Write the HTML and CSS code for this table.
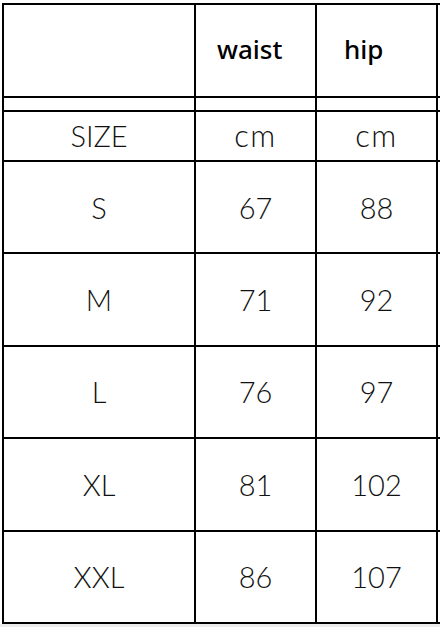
FILE: index.html
```html
<!DOCTYPE html>
<html>
<head>
<meta charset="utf-8">
<link rel="stylesheet" href="styles.css">
</head>
<body>
<div class="page">
  <div class="chart">
    <div class="cell head"></div>
    <div class="cell head waist">waist</div>
    <div class="cell head hip">hip</div>
    <div class="cell head"></div>

    <div class="cell thin"></div>
    <div class="cell thin"></div>
    <div class="cell thin"></div>
    <div class="cell thin"></div>

    <div class="cell unit">SIZE</div>
    <div class="cell unit cm">cm</div>
    <div class="cell unit cm">cm</div>
    <div class="cell unit"></div>

    <div class="cell">S</div><div class="cell">67</div><div class="cell">88</div><div class="cell"></div>
    <div class="cell">M</div><div class="cell">71</div><div class="cell">92</div><div class="cell"></div>
    <div class="cell">L</div><div class="cell">76</div><div class="cell">97</div><div class="cell"></div>
    <div class="cell">XL</div><div class="cell">81</div><div class="cell">102</div><div class="cell"></div>
    <div class="cell">XXL</div><div class="cell">86</div><div class="cell">107</div><div class="cell"></div>
  </div>
</div>
</body>
</html>
```
FILE: styles.css
```css
html, body {
  margin: 0;
  padding: 0;
  background: #ececec;
  overflow: hidden;
}

.page {
  width: 440px;
  height: 624px;
  background: #ffffff;
  overflow: hidden;
}

.chart {
  margin-top: 3px;
  margin-left: 2px;
  width: 460px;
  display: grid;
  grid-template-columns: 190px 119px 119px 30px;
  grid-template-rows: 91px 12px 48px repeat(5, 90.4px);
  gap: 2px;
  padding: 2px 0 2px 2px;
  background: #000000;
}

.cell {
  background: #ffffff;
  display: flex;
  align-items: center;
  justify-content: center;
  font-family: "Lato", "Liberation Sans", sans-serif;
  font-weight: 300;
  font-size: 29px;
  color: #111111;
}

.unit {
  padding-bottom: 2px;
}

.cm {
  font-size: 31px;
  letter-spacing: 1.5px;
}

.head {
  font-family: "Noto Sans", "Open Sans", sans-serif;
  font-weight: 500;
  font-size: 26px;
  color: #000000;
  justify-content: flex-start;
  padding-bottom: 4px;
}

.waist {
  padding-left: 21px;
}

.hip {
  padding-left: 27px;
}
```
